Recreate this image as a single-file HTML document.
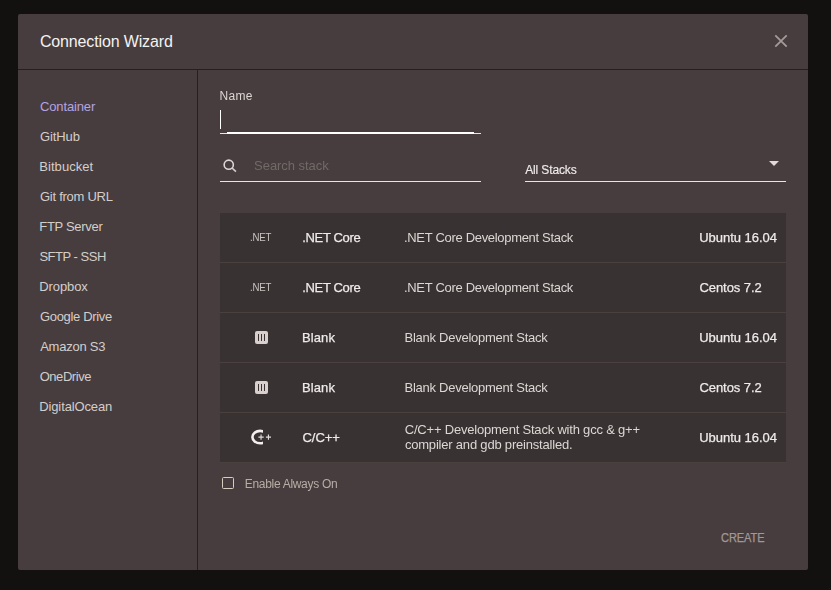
<!DOCTYPE html>
<html>
<head>
<meta charset="utf-8">
<title>Connection Wizard</title>
<style>
*{box-sizing:border-box;margin:0;padding:0}
html,body{width:831px;height:590px;overflow:hidden;background:#131110;font-family:"Liberation Sans",sans-serif;}
.abs{position:absolute}
#dlg{position:absolute;left:18px;top:14px;width:790px;height:556px;background:#473d3e;border-radius:2px;overflow:hidden}
#hdr{position:absolute;left:0;top:0;width:790px;height:56px;border-bottom:1px solid #242020}
#side{position:absolute;left:0;top:56px;width:180px;height:500px;border-right:1px solid #242020}
.t{position:absolute;white-space:nowrap;font-size:13px;line-height:16px}
#list{position:absolute;left:202px;top:199px;width:566px;height:249px;background:#393232}
.sep{position:absolute;left:0;width:566px;height:1px;background:#4a4040}
.ic{position:absolute}
.g{position:absolute;left:0;top:0;width:790px;height:556px;will-change:transform}
</style>
</head>
<body>
<div style="position:absolute;left:829px;top:588px;width:1px;height:1px;background:#0000ff"></div>
<div id="dlg">
  <div id="hdr"></div>
  <svg class="abs" style="left:755px;top:19px" width="16" height="16" viewBox="0 0 16 16"><path d="M2.3 2.3 L13.7 13.7 M13.7 2.3 L2.3 13.7" stroke="#a39b9a" stroke-width="1.8" fill="none"/></svg>
  <div id="side"></div>

  <!-- Name field -->
  <div class="abs" style="left:202px;top:96px;width:1px;height:19px;background:#ffffff"></div>
  <div class="abs" style="left:202px;top:119px;width:261px;height:1px;background:#e9e5e3"></div>
  <div class="abs" style="left:209px;top:118px;width:247px;height:2px;background:#ffffff"></div>

  <!-- Search -->
  <svg class="abs" style="left:204px;top:144px" width="16" height="16" viewBox="0 0 16 16"><circle cx="6.75" cy="6.7" r="4.6" stroke="#dcd6d4" stroke-width="1.6" fill="none"/><path d="M10.1 10.0 L13.9 13.6" stroke="#d2ccca" stroke-width="1.7"/></svg>
  <div class="abs" style="left:202px;top:167px;width:261px;height:1px;background:#e9e5e3"></div>

  <!-- Select -->
  <div class="abs" style="left:751px;top:147px;width:0;height:0;border-left:5px solid transparent;border-right:5px solid transparent;border-top:5px solid #e2dad8"></div>
  <div class="abs" style="left:507px;top:167px;width:261px;height:1px;background:#e9e5e3"></div>

  <!-- List -->
  <div id="list">
    <div class="sep" style="top:49px"></div><div class="sep" style="top:99px"></div><div class="sep" style="top:149px"></div><div class="sep" style="top:199px"></div><div class="sep" style="top:249px"></div>

    <svg class="ic" style="left:34px;top:117px" width="15" height="15" viewBox="0 0 15 15"><rect x="1" y="1" width="13" height="13" rx="2" fill="#d8cfcf"/><rect x="4" y="4" width="1" height="7" fill="#3a3232"/><rect x="7" y="4" width="1" height="7" fill="#3a3232"/><rect x="10" y="4" width="1" height="7" fill="#3a3232"/></svg>
    <svg class="ic" style="left:34px;top:167px" width="15" height="15" viewBox="0 0 15 15"><rect x="1" y="1" width="13" height="13" rx="2" fill="#d8cfcf"/><rect x="4" y="4" width="1" height="7" fill="#3a3232"/><rect x="7" y="4" width="1" height="7" fill="#3a3232"/><rect x="10" y="4" width="1" height="7" fill="#3a3232"/></svg>
    <svg class="ic" style="left:29px;top:214px" width="26" height="20" viewBox="0 0 26 20"><defs><clipPath id="cc"><rect x="0" y="0" width="14.1" height="20"/></clipPath></defs><ellipse cx="11.1" cy="10.1" rx="7.7" ry="6.2" stroke="#f2efee" stroke-width="2.6" fill="none" clip-path="url(#cc)"/><path d="M9.4 10.1 h5.3 M12.05 7.4 v5.4 M16.9 10.1 h5.1 M19.45 7.4 v5.4" stroke="#e4dfdd" stroke-width="1.1" fill="none"/></svg>
  </div>

  <!-- Checkbox -->
  <div class="abs" style="left:204px;top:463px;width:12px;height:12px;border:1.5px solid #d6cfc1;border-radius:1.5px"></div>

<div class="t" style="left:21.91px;top:18px;font-size:16px;line-height:20px;color:#f4f2f1;letter-spacing:-0.143px">Connection Wizard</div>
<div class="t" style="left:22.00px;top:85px;color:#b4a3e2;letter-spacing:-0.143px">Container</div>
<div class="t" style="left:22.02px;top:115px;color:#d3cecb;letter-spacing:-0.118px">GitHub</div>
<div class="t" style="left:21.24px;top:145px;color:#d3cecb;letter-spacing:0.066px">Bitbucket</div>
<div class="t" style="left:22.02px;top:175px;color:#d3cecb;letter-spacing:-0.266px">Git from URL</div>
<div class="t" style="left:21.24px;top:205px;color:#d3cecb;letter-spacing:-0.295px">FTP Server</div>
<div class="t" style="left:21.44px;top:235px;color:#d3cecb;letter-spacing:-0.491px">SFTP - SSH</div>
<div class="t" style="left:21.24px;top:265px;color:#d3cecb;letter-spacing:-0.092px">Dropbox</div>
<div class="t" style="left:22.02px;top:295px;color:#d3cecb;letter-spacing:-0.341px">Google Drive</div>
<div class="t" style="left:22.13px;top:325px;color:#d3cecb;letter-spacing:-0.226px">Amazon S3</div>
<div class="t" style="left:21.66px;top:355px;color:#d3cecb;letter-spacing:-0.448px">OneDrive</div>
<div class="t" style="left:21.24px;top:385px;color:#d3cecb;letter-spacing:-0.123px">DigitalOcean</div>
<div class="t" style="left:702.61px;top:516px;font-size:12px;color:#a09897;-webkit-text-stroke:0.25px;transform:scaleX(.92);transform-origin:0 0;letter-spacing:-0.071px">CREATE</div>
<div class="g"><div class="t" style="left:201.57px;top:74px;font-size:12px;color:#dcd7d5;letter-spacing:0.257px">Name</div>
<div class="t" style="left:236.08px;top:144px;color:#716968;letter-spacing:-0.043px">Search stack</div>
<div class="t" style="left:507.18px;top:148px;font-size:12px;color:#efeceb;-webkit-text-stroke:0.15px;letter-spacing:-0.132px">All Stacks</div>
<div class="t" style="left:284.30px;top:216px;color:#eeebea;-webkit-text-stroke:0.25px;letter-spacing:-0.357px">.NET Core</div>
<div class="t" style="left:284.30px;top:266px;color:#eeebea;-webkit-text-stroke:0.25px;letter-spacing:-0.357px">.NET Core</div>
<div class="t" style="left:283.98px;top:316px;color:#eeebea;-webkit-text-stroke:0.25px;letter-spacing:0.122px">Blank</div>
<div class="t" style="left:283.98px;top:366px;color:#eeebea;-webkit-text-stroke:0.25px;letter-spacing:0.122px">Blank</div>
<div class="t" style="left:284.45px;top:416px;color:#eeebea;-webkit-text-stroke:0.25px;letter-spacing:-0.026px">C/C++</div>
<div class="t" style="left:386.00px;top:216px;color:#dcd7d5;letter-spacing:-0.314px">.NET Core Development Stack</div>
<div class="t" style="left:386.00px;top:266px;color:#dcd7d5;letter-spacing:-0.314px">.NET Core Development Stack</div>
<div class="t" style="left:386.53px;top:316px;color:#dcd7d5;letter-spacing:-0.254px">Blank Development Stack</div>
<div class="t" style="left:386.53px;top:366px;color:#dcd7d5;letter-spacing:-0.254px">Blank Development Stack</div>
<div class="t" style="left:386.75px;top:408px;color:#dcd7d5;letter-spacing:-0.203px">C/C++ Development Stack with gcc &amp; g++</div>
<div class="t" style="left:386.88px;top:423px;color:#dcd7d5;letter-spacing:-0.197px">compiler and gdb preinstalled.</div>
<div class="t" style="left:681.24px;top:216px;color:#eeebea;-webkit-text-stroke:0.25px;letter-spacing:-0.022px">Ubuntu 16.04</div>
<div class="t" style="left:681.47px;top:266px;color:#eeebea;-webkit-text-stroke:0.25px;letter-spacing:-0.074px">Centos 7.2</div>
<div class="t" style="left:681.24px;top:316px;color:#eeebea;-webkit-text-stroke:0.25px;letter-spacing:-0.022px">Ubuntu 16.04</div>
<div class="t" style="left:681.47px;top:366px;color:#eeebea;-webkit-text-stroke:0.25px;letter-spacing:-0.074px">Centos 7.2</div>
<div class="t" style="left:681.24px;top:416px;color:#eeebea;-webkit-text-stroke:0.25px;letter-spacing:-0.022px">Ubuntu 16.04</div>
<div class="t" style="left:232.08px;top:216px;font-size:11.5px;color:#c9c3c1;transform:translateY(-0.7px) scaleX(.84);transform-origin:0 0;letter-spacing:-0.249px">.NET</div>
<div class="t" style="left:232.08px;top:266px;font-size:11.5px;color:#c9c3c1;transform:translateY(-0.7px) scaleX(.84);transform-origin:0 0;letter-spacing:-0.249px">.NET</div>
<div class="t" style="left:226.80px;top:462px;font-size:12px;color:#b6aea4;letter-spacing:-0.307px">Enable Always On</div></div>

</div>
</body>
</html>
